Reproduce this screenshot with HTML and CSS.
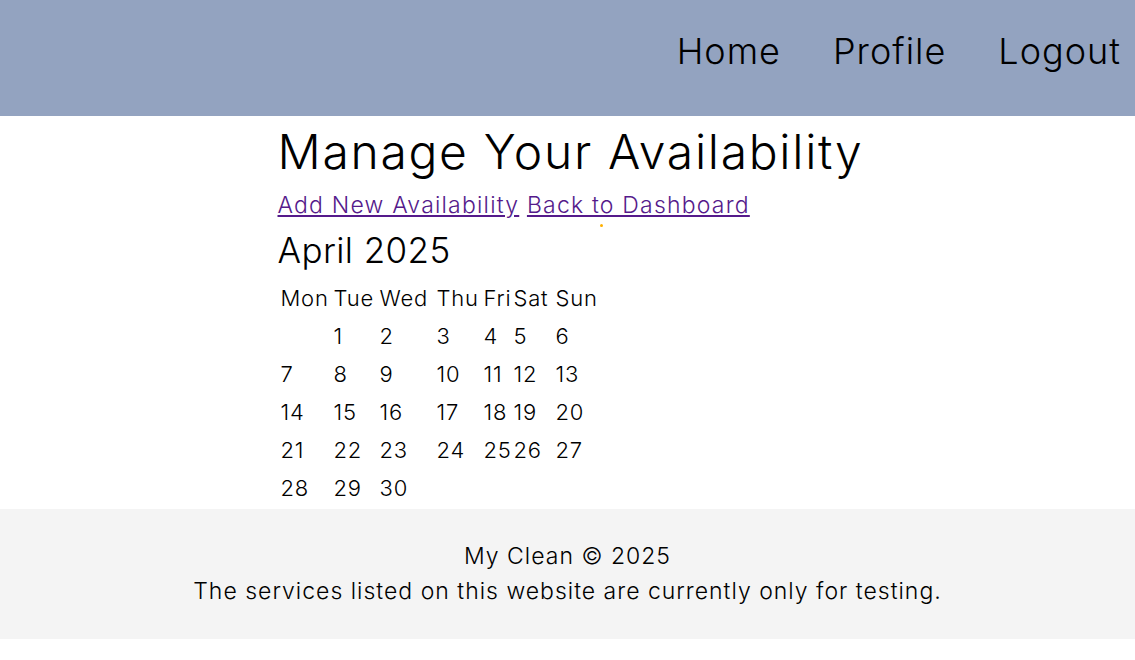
FILE: index.html
```html
<!DOCTYPE html>
<html lang="en">
<head>
<meta charset="utf-8">
<title>Manage Your Availability</title>
<link rel="stylesheet" href="styles.css">
</head>
<body>
<header class="topbar">
  <nav class="nav">
    <a class="nav-link" href="#">Home</a>
    <a class="nav-link" href="#">Profile</a>
    <a class="nav-link" href="#">Logout</a>
  </nav>
</header>
<main class="content">
  <h1 class="title">Manage Your Availability</h1>
  <div class="actions">
    <a class="action-link" href="#">Add New Availability</a>
    <a class="action-link" href="#">Back to Dashboard</a>
    <span class="dot"></span>
  </div>
  <h2 class="month">April 2025</h2>
  <table class="cal">
    <thead>
      <tr><th class="c-mon">Mon</th><th class="c-tue">Tue</th><th class="c-wed">Wed</th><th class="c-thu">Thu</th><th class="c-fri">Fri</th><th class="c-sat">Sat</th><th class="c-sun">Sun</th></tr>
    </thead>
    <tbody>
      <tr><td></td><td>1</td><td>2</td><td>3</td><td>4</td><td>5</td><td>6</td></tr>
      <tr><td>7</td><td>8</td><td>9</td><td>10</td><td>11</td><td>12</td><td>13</td></tr>
      <tr><td>14</td><td>15</td><td>16</td><td>17</td><td>18</td><td>19</td><td>20</td></tr>
      <tr><td>21</td><td>22</td><td>23</td><td>24</td><td>25</td><td>26</td><td>27</td></tr>
      <tr><td>28</td><td>29</td><td>30</td><td></td><td></td><td></td><td></td></tr>
    </tbody>
  </table>
</main>
<footer class="footer">
  <p class="footer-line">My Clean © 2025</p>
  <p class="footer-line">The services listed on this website are currently only for testing.</p>
</footer>
</body>
</html>
```
FILE: styles.css
```css
html, body {
  margin: 0;
  padding: 0;
  background: #ffffff;
}
body {
  font-family: "Inter", "Noto Sans", sans-serif;
  font-weight: 300;
  color: #000;
}
.topbar {
  background: #93a3c0;
  height: 116px;
  box-sizing: border-box;
  display: flex;
  justify-content: flex-end;
  align-items: center;
  padding: 0 14px 14px 0;
}
.nav {
  display: flex;
  gap: 52px;
}
.nav-link {
  color: #000;
  text-decoration: none;
  font-size: 36px;
  line-height: 44px;
  letter-spacing: 1px;
}
.content {
  width: 580px;
  margin: 0 auto;
}
.title {
  font-size: 48px;
  font-weight: 300;
  line-height: 60px;
  margin: 6px 0 0 0;
  letter-spacing: 1.7px;
  white-space: nowrap;
}
.actions {
  position: relative;
  font-size: 23px;
  line-height: 30px;
  margin-top: 8px;
  letter-spacing: 1.2px;
  white-space: nowrap;
}
.action-link {
  color: #551a8b;
}
.dot {
  position: absolute;
  left: 322px;
  top: 34px;
  width: 3px;
  height: 3px;
  border-radius: 50%;
  background: #ffb000;
}
.month {
  font-size: 35px;
  font-weight: 300;
  line-height: 46px;
  margin: 7px 0 0 0;
  letter-spacing: 0.4px;
}
.cal {
  border-spacing: 2px;
  font-size: 22px;
  table-layout: fixed;
  width: 325px;
  margin-top: 5px;
  letter-spacing: 0.8px;
}
.cal th, .cal td {
  box-sizing: border-box;
  padding: 1px;
  line-height: 34px;
  text-align: left;
  font-weight: 300;
  white-space: nowrap;
  overflow: visible;
}
.c-mon { width: 51px; }
.c-tue { width: 44px; }
.c-wed { width: 55px; }
.c-thu { width: 45px; }
.c-fri { width: 28px; }
.c-sat { width: 40px; }
.c-sun { width: 46px; }
.footer {
  background: #f4f4f4;
  margin-top: 1px;
  padding: 30px 0 30px;
  text-align: center;
  font-size: 23px;
  line-height: 35px;
  letter-spacing: 1px;
}
.footer-line {
  margin: 0;
}
```
